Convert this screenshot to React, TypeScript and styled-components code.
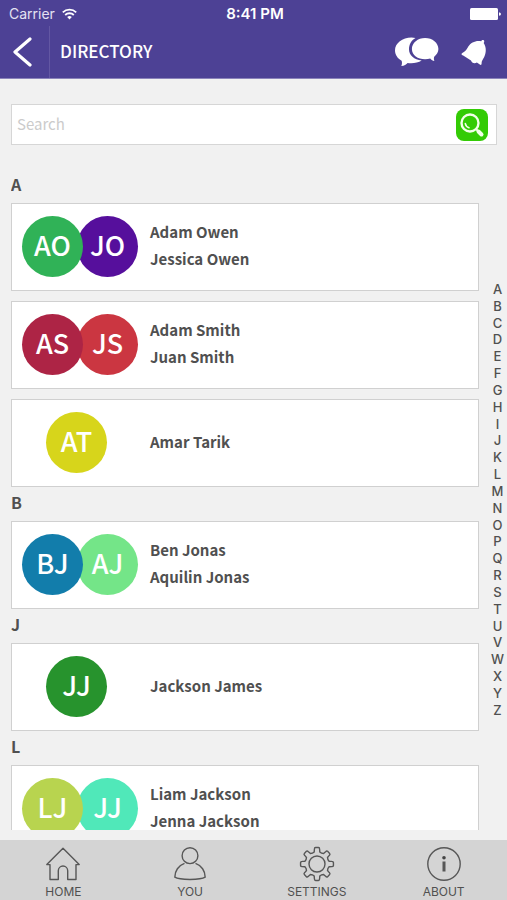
import React from "react";
import styled, { createGlobalStyle } from "styled-components";

const sans = `"Noto Sans CJK SC", "Noto Sans", sans-serif`;
const system = `Inter, "Liberation Sans", sans-serif`;

const GlobalStyle = createGlobalStyle`
  *, *::before, *::after { box-sizing: border-box; }
  body { margin: 0; background: #f1f1f1; color: #505050; font-family: ${sans}; }
  h1, h2, p, ul, ol { margin: 0; padding: 0; }
  ul, ol { list-style: none; }
  button { border: 0; padding: 0; background: none; color: inherit; cursor: pointer; }
  a { color: inherit; text-decoration: none; }
  svg { display: block; }
`;

const Screen = styled.div`
  display: flex;
  flex-direction: column;
  height: 100vh;
  overflow: hidden;
`;

const Header = styled.header`
  flex: none;
  background: #4d4195;
  border-bottom: 1px solid #8b83ba;
  color: #fff;
`;

const StatusBar = styled.div`
  display: grid;
  grid-template-columns: 1fr auto 1fr;
  align-items: center;
  height: 26px;
  padding: 2px 6px 0 9px;
  font: 500 14px/24px ${system};
`;

const Carrier = styled.span`
  display: flex;
  align-items: center;
  gap: 7px;
  font-weight: 400;
  color: #e4e1f2;
`;

const Clock = styled.span`
  font-size: 15px;
  font-weight: 600;
`;

const BatterySlot = styled.span`
  justify-self: end;
`;

const NavBar = styled.div`
  display: flex;
  align-items: stretch;
  height: 52px;
  padding-right: 20px;
`;

const BackButton = styled.button`
  display: flex;
  align-items: center;
  width: 50px;
  padding-left: 12px;
  border-right: 1px solid #6357a3;
`;

const Title = styled.h1`
  flex: 1;
  padding-left: 10px;
  font-size: 17px;
  font-weight: 500;
  line-height: 50px;
`;

const NavActions = styled.div`
  display: flex;
  align-items: center;
  gap: 22px;
`;

const Main = styled.main`
  display: flex;
  flex-direction: column;
  flex: 1;
  min-height: 0;
  gap: 24px;
  padding-top: 25px;
  margin-bottom: 10px;
`;

const SearchForm = styled.form`
  display: flex;
  align-items: center;
  flex: none;
  height: 41px;
  margin: 0 10px 0 11px;
  padding: 0 8px 0 5px;
  border: 1px solid #d6d6d6;
  background: #fff;
`;

const SearchInput = styled.input`
  flex: 1;
  min-width: 0;
  height: 100%;
  padding: 0 0 2px;
  border: 0;
  outline: 0;
  background: transparent;
  color: #505050;
  font: 400 15px/24px ${sans};
  &::placeholder { color: #cbcbcb; opacity: 1; }
`;

const SearchButton = styled.button`
  display: grid;
  place-items: center;
  width: 32px;
  height: 32px;
  border-radius: 8px;
  background: #33cb05;
`;

const Directory = styled.div`
  display: flex;
  flex: 1;
  min-height: 0;
  gap: 9px;
  padding-left: 11px;
`;

const List = styled.div`
  flex: 1;
  min-width: 0;
  overflow-y: auto;
  scrollbar-width: none;
`;

const GroupTitle = styled.h2`
  height: 34px;
  font-size: 16px;
  font-weight: 700;
  line-height: 30px;
`;

const Cards = styled.ul`
  display: grid;
  gap: 10px;
`;

const Card = styled.li`
  display: flex;
  align-items: center;
  height: 88px;
  padding-bottom: 2px;
  border: 1px solid #d0d0d0;
  background: #fff;
`;

const Avatars = styled.div<{ $single: boolean }>`
  display: flex;
  flex: none;
  width: 138px;
  padding-left: ${(p) => (p.$single ? 34 : 10)}px;
`;

const Avatar = styled.span<{ $color: string }>`
  position: relative;
  flex: none;
  width: 61px;
  height: 61px;
  border-radius: 50%;
  background: ${(p) => p.$color};
  color: #fff;
  font-size: 27px;
  font-weight: 500;
  line-height: 57px;
  text-align: center;
  z-index: 1;
  & + & { margin-left: -6px; z-index: 0; }
`;

const Names = styled.div`
  padding-bottom: 2px;
  font-size: 15px;
  font-weight: 700;
  line-height: 27px;
`;

const Index = styled.nav`
  display: flex;
  flex-direction: column;
  justify-content: space-between;
  align-self: center;
  width: 19px;
  height: 437px;
  font: 500 13px/16px ${system};
  text-align: center;
`;

const TabBar = styled.nav`
  display: grid;
  grid-template-columns: repeat(4, 1fr);
  flex: none;
  height: 60px;
  background: #d4d4d4;
`;

const Tab = styled.a`
  display: flex;
  flex-direction: column;
  align-items: center;
  gap: 2px;
  padding-top: 6px;
  font: 400 12px/16px ${system};
`;

const WifiIcon = () => (
  <svg width="15" height="12" viewBox="0 0 15 12" fill="none" stroke="#fff" strokeWidth="1.8" aria-hidden="true">
    <path d="M.8 4.4a9.6 9.6 0 0 1 13.4 0M3.2 7a6.2 6.2 0 0 1 8.6 0" />
    <path d="M5.2 9a3.4 3.4 0 0 1 4.6 0L7.5 11.4Z" fill="#fff" stroke="none" />
  </svg>
);

const BatteryIcon = () => (
  <svg width="31" height="12" viewBox="0 0 31 12" fill="#fff" aria-hidden="true">
    <rect width="28" height="12" rx="1.5" />
    <path d="M29 4.2q2 .4 2 1.8t-2 1.8Z" />
  </svg>
);

const BackIcon = () => (
  <svg width="21" height="30" viewBox="0 0 21 30" fill="none" stroke="#fff" strokeWidth="3.2" strokeLinecap="round" strokeLinejoin="round" aria-hidden="true">
    <path d="M18 2 3 15 18 28" />
  </svg>
);

const ChatIcon = () => (
  <svg width="44" height="30" viewBox="0 0 44 30" fill="#fff" aria-hidden="true">
    <path d="M20.5 1C19.2.7 17.9.5 16.5.5 7.400.5 0 6.200 0 13.300c0 4.500 2.600 8.300 6.600 10.500.6 1.800.5 3.400-.3 5.200 3-.3 5-1.500 6.300-3.100 4.700.7 10.300 0 14.100-2.400-7.600-.8-12.700-5.200-12.700-11 0-5 2.300-9.300 6.500-11.500Z" />
    <path d="M30.100 1C22.800 1 16.900 5.900 16.900 12s5.900 10.300 13.200 10.300c1.900 0 3.600-.3 5.100-.8 1.200 1.300 2.500 2.300 4.200 2.500-.6-1.400-.7-2.900-.2-4.300 2.500-2 4.200-4.600 4.200-7.700 0-6.100-6-11-13.300-11Z" />
  </svg>
);

const BellIcon = () => (
  <svg width="26" height="27" viewBox="0 0 26 27" fill="#fff" aria-hidden="true">
    <path d="M20.300 2.300C20.500.8 22.900.5 23.200 2.100c.1.700-.1 1.300-.5 1.900 2.800 4.300 2.600 9.900.4 14.300-1.300 2.600-2.700 3.700-2.500 6.400.1 1.200-.9 1.600-1.800.9l-2.900-2.100c-2.100 1.600-5.400.5-5.900-1.900L2.200 16.500c-2.100-.7-2.300-1.900-.5-2.800C5.500 11.800 5.700 10.200 7.300 7.600c2.500-4.200 8-6.600 13-5.300Z" />
  </svg>
);

const SearchIcon = () => (
  <svg width="26" height="26" viewBox="0 0 26 26" fill="none" stroke="#f2ffe9" strokeLinecap="round" aria-hidden="true">
    <circle cx="11" cy="11" r="8.500" strokeWidth="2.400" />
    <path d="M6.300 11.500q.6 3.300 3.700 4.200" strokeWidth="1.500" />
    <path d="m17.300 17.300 2 2" strokeWidth="2" />
    <path d="m19.500 19.500 3 3" strokeWidth="4" />
  </svg>
);

const line = { width: 36, height: 36, viewBox: "0 0 36 36", fill: "none", stroke: "#575757", strokeWidth: 1.4, strokeLinejoin: "round" as const, "aria-hidden": true };

const HomeIcon = () => (
  <svg {...line}>
    <path d="M18 2.300 1.800 18.600H5V33.500h8.300V24.700a4.700 4.700 0 0 1 9.400 0V33.500H31V18.600h3.200Z" />
  </svg>
);

const UserIcon = () => (
  <svg {...line}>
    <circle cx="18" cy="9.700" r="7.900" />
    <path d="M12.500 17.400C6.500 19.500 2.800 25 2.800 31.200 7.500 34.200 28.500 34.200 33.200 31.200c0-6.200-3.700-11.700-9.700-13.800" />
  </svg>
);

const gearPath = (() => {
  const point = (radius: number, degrees: number) => {
    const a = (degrees * Math.PI) / 180;
    return `${(18 + radius * Math.sin(a)).toFixed(2)} ${(18 - radius * Math.cos(a)).toFixed(2)}`;
  };
  let d = "";
  for (let tooth = 0; tooth < 8; tooth++) {
    const a = tooth * 45;
    d += `${tooth ? "L" : "M"}${point(12.4, a - 13)} L${point(15, a - 10)} Q${point(16.6, a - 9)} ${point(16.5, a - 5)}`;
    d += ` L${point(16.5, a + 5)} Q${point(16.6, a + 9)} ${point(15, a + 10)} L${point(12.4, a + 13)} Q${point(11.4, a + 22.5)} ${point(12.4, a + 32)}`;
  }
  return d + "Z";
})();

const GearIcon = () => (
  <svg {...line}>
    <path d={gearPath} />
    <circle cx="18" cy="18" r="8" />
  </svg>
);

const InfoIcon = () => (
  <svg {...line}>
    <circle cx="18" cy="18" r="16.200" />
    <path d="M18 15.500V25.500" strokeWidth="3" />
    <circle cx="18" cy="11.700" r="1.800" fill="#444" stroke="none" />
  </svg>
);

type Person = { name: string; initials: string; color: string };

const groups: { letter: string; households: Person[][] }[] = [
  {
    letter: "A",
    households: [
      [
        { name: "Adam Owen", initials: "AO", color: "#30b257" },
        { name: "Jessica Owen", initials: "JO", color: "#560f9c" },
      ],
      [
        { name: "Adam Smith", initials: "AS", color: "#ad2445" },
        { name: "Juan Smith", initials: "JS", color: "#cb3641" },
      ],
      [{ name: "Amar Tarik", initials: "AT", color: "#d7d51b" }],
    ],
  },
  {
    letter: "B",
    households: [
      [
        { name: "Ben Jonas", initials: "BJ", color: "#127dab" },
        { name: "Aquilin Jonas", initials: "AJ", color: "#74e588" },
      ],
    ],
  },
  {
    letter: "J",
    households: [[{ name: "Jackson James", initials: "JJ", color: "#27932d" }]],
  },
  {
    letter: "L",
    households: [
      [
        { name: "Liam Jackson", initials: "LJ", color: "#b8d44f" },
        { name: "Jenna Jackson", initials: "JJ", color: "#50e8b9" },
      ],
    ],
  },
];

const tabs = [
  { label: "HOME", Icon: HomeIcon },
  { label: "YOU", Icon: UserIcon },
  { label: "SETTINGS", Icon: GearIcon },
  { label: "ABOUT", Icon: InfoIcon },
];

export default function App() {
  return (
    <>
      <GlobalStyle />
      <Screen>
        <Header>
          <StatusBar>
            <Carrier>
              Carrier <WifiIcon />
            </Carrier>
            <Clock>8:41 PM</Clock>
            <BatterySlot>
              <BatteryIcon />
            </BatterySlot>
          </StatusBar>
          <NavBar>
            <BackButton type="button" aria-label="Back">
              <BackIcon />
            </BackButton>
            <Title>DIRECTORY</Title>
            <NavActions>
              <button type="button" aria-label="Messages">
                <ChatIcon />
              </button>
              <button type="button" aria-label="Notifications">
                <BellIcon />
              </button>
            </NavActions>
          </NavBar>
        </Header>
        <Main>
          <SearchForm role="search" onSubmit={(e) => e.preventDefault()}>
            <SearchInput type="text" placeholder="Search" aria-label="Search" />
            <SearchButton type="submit" aria-label="Search directory">
              <SearchIcon />
            </SearchButton>
          </SearchForm>
          <Directory>
            <List>
              {groups.map(({ letter, households }) => (
                <section key={letter} id={`group-${letter}`}>
                  <GroupTitle>{letter}</GroupTitle>
                  <Cards>
                    {households.map((people) => (
                      <Card key={people[0].name}>
                        <Avatars $single={people.length === 1}>
                          {people.map((p) => (
                            <Avatar key={p.name} $color={p.color}>
                              {p.initials}
                            </Avatar>
                          ))}
                        </Avatars>
                        <Names>
                          {people.map((p) => (
                            <p key={p.name}>{p.name}</p>
                          ))}
                        </Names>
                      </Card>
                    ))}
                  </Cards>
                </section>
              ))}
            </List>
            <Index aria-label="Jump to letter">
              {[..."ABCDEFGHIJKLMNOPQRSTUVWXYZ"].map((letter) => (
                <a key={letter} href={`#group-${letter}`}>
                  {letter}
                </a>
              ))}
            </Index>
          </Directory>
        </Main>
        <TabBar aria-label="Main">
          {tabs.map(({ label, Icon }) => (
            <Tab key={label} href={`#${label.toLowerCase()}`}>
              <Icon />
              {label}
            </Tab>
          ))}
        </TabBar>
      </Screen>
    </>
  );
}
